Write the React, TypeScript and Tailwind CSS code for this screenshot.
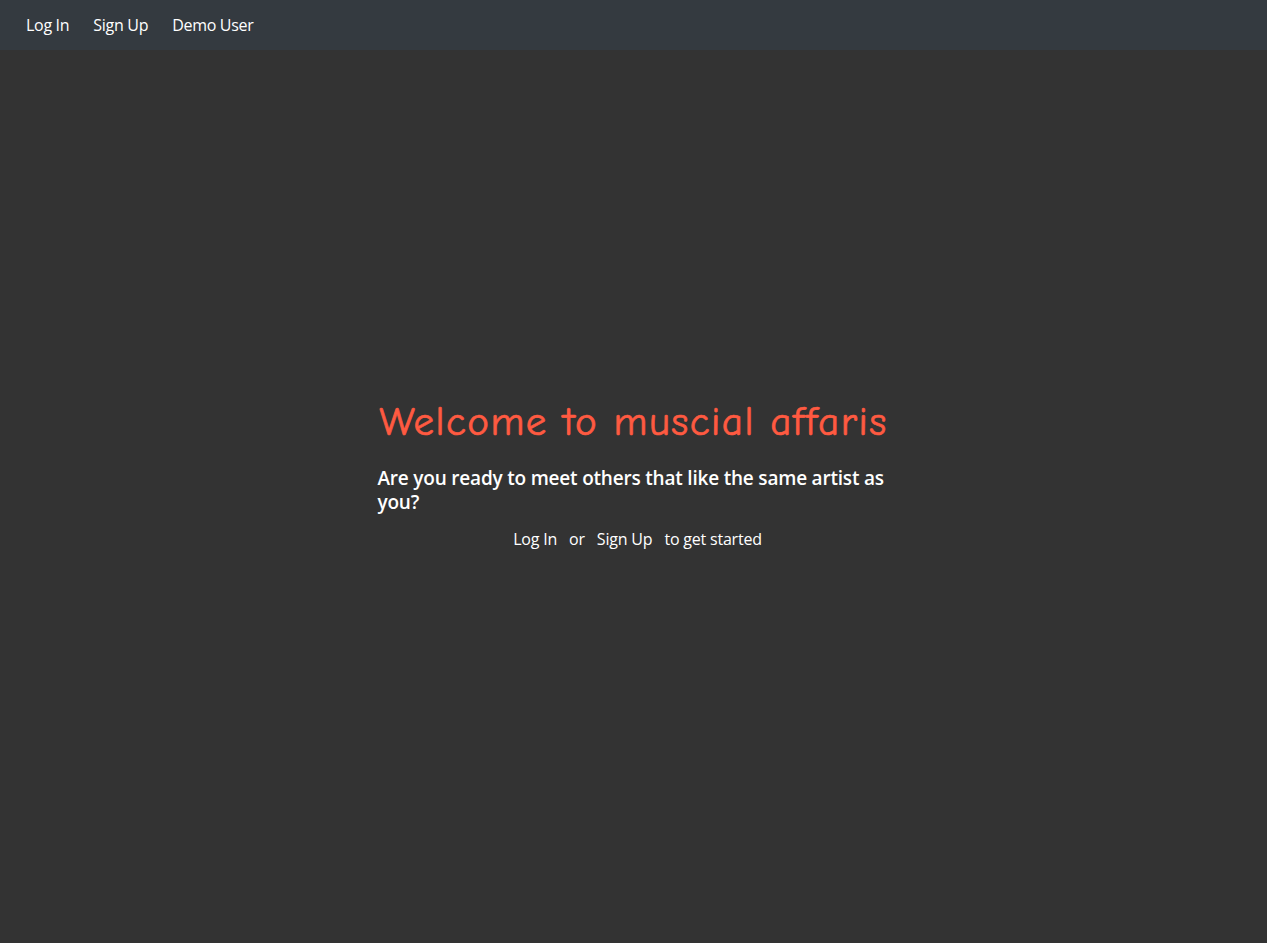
export default function App() {
  const font = "font-['Segoe_UI','Open_Sans','Noto_Sans',sans-serif]";

  return (
    <div className={`min-h-screen bg-[#333333] text-white ${font}`}>
      <nav className="h-[50px] bg-[#343a40] flex items-center pl-[14px]">
        {["Log In", "Sign Up", "Demo User"].map((label) => (
          <a key={label} href="#" className="px-3 text-[16px] leading-6 text-white tracking-[-0.3px]">
            {label}
          </a>
        ))}
      </nav>

      <main className="flex justify-center pt-[348px]">
        <div className="w-[512px] flex flex-col">
          <h1 className="text-center whitespace-nowrap text-[41px] leading-[48px] text-[#ff5a41] font-['Comic_Sans_MS','Comic_Neue','DejaVu_Sans',cursive] tracking-[1.5px] [-webkit-text-stroke:0.7px_#ff5a41]">
            Welcome to muscial affaris
          </h1>
          <h2 className="mt-[20px] text-[19px] leading-6 font-semibold text-white tracking-[-0.2px]">
            Are you ready to meet others that like the same artist as you?
          </h2>
          <p className="mt-[13px] text-center text-[16px] leading-6 tracking-[-0.2px] pl-[8px]">
            <a href="#" className="text-white">Log In</a>
            <span className="mx-3">or</span>
            <a href="#" className="text-white">Sign Up</a>
            <span className="ml-3">to get started</span>
          </p>
        </div>
      </main>
    </div>
  );
}
